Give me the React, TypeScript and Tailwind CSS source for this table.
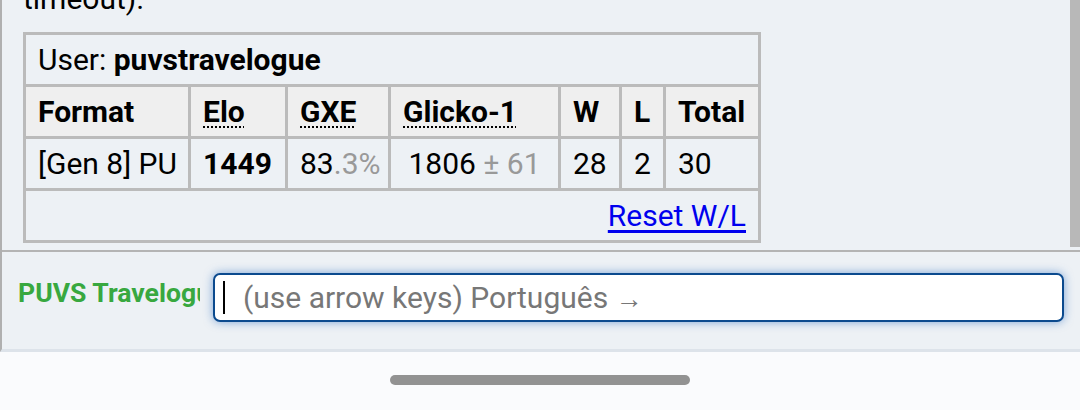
import React from "react";

export default function App() {
  const cell = "flex items-center px-[12px] bg-[#edf1f5] h-[49px] whitespace-nowrap";
  const head = "flex items-center px-[12px] bg-[#efefef] h-[49px] font-bold whitespace-nowrap";
  const abbr = "underline decoration-dotted decoration-[2px] underline-offset-[4px]";
  return (
    <div className="w-[1080px] h-[410px] overflow-hidden bg-[#fafbfd] font-['Roboto',sans-serif] text-[30px] text-black flex flex-col">
      <div className="h-[352px] border-l-[2px] border-b-[3px] border-l-[#b0b0b0] border-b-[#dde3ea] bg-[#edf1f5] flex flex-col">
        <div className="h-[252px] border-b-2 border-[#b4b4b4] flex">
          <div className="flex-1 overflow-hidden pl-[21px]">
            <div className="-mt-[18px] leading-[34px] h-[34px]">timeout).</div>
            <div className="mt-[16px] w-[738px] border-[3px] border-[#bbbbbb] bg-[#bbbbbb] grid grid-cols-[162px_94px_100px_167px_58px_41px_92px] gap-[3px]">
              <div className={`${cell} col-span-7`}>
                <span>User:&nbsp;</span>
                <span className="font-bold">puvstravelogue</span>
              </div>
              <div className={head}>Format</div>
              <div className={head}><span className={abbr}>Elo</span></div>
              <div className={head}><span className={abbr}>GXE</span></div>
              <div className={head}><span className={abbr}>Glicko-1</span></div>
              <div className={head}>W</div>
              <div className={head}>L</div>
              <div className={head}>Total</div>
              <div className={cell}>[Gen 8] PU</div>
              <div className={`${cell} font-bold`}>1449</div>
              <div className={cell}>
                83<span className="text-[#999999]">.3%</span>
              </div>
              <div className={`${cell} justify-center`}>
                1806<span className="text-[#999999]">&nbsp;± 61</span>
              </div>
              <div className={cell}>28</div>
              <div className={cell}>2</div>
              <div className={cell}>30</div>
              <div className={`${cell} col-span-7 justify-end`}>
                <a className="text-[#0000ee] underline underline-offset-[4px]" href="#">Reset W/L</a>
              </div>
            </div>
          </div>
          <div className="w-[10px] h-[247px] bg-[#b8b8b8]" />
        </div>
        <div className="flex-1 flex items-start pt-[21px] pl-[16px] pr-[16px]">
          <div className="w-[182px] overflow-hidden whitespace-nowrap mt-[4px] leading-[32px] text-[26.6px] font-bold text-[#38a83f]">
            PUVS Travelogue
          </div>
          <div className="ml-[13px] flex-1 h-[49px] rounded-[7px] border-2 border-[#0b4a8e] bg-white shadow-[0_0_10px_rgba(30,100,190,0.55)] flex items-center pl-[8px]">
            <div className="w-[2px] h-[33px] bg-black" />
            <span className="ml-[18px] text-[#777777] text-[30px] whitespace-nowrap">
              (use arrow keys) Português <span className="text-[27px]">→</span>
            </span>
          </div>
        </div>
      </div>
      <div className="flex-1 flex justify-center pt-[23px]">
        <div className="w-[300px] h-[10px] rounded-full bg-[#929292]" />
      </div>
    </div>
  );
}
